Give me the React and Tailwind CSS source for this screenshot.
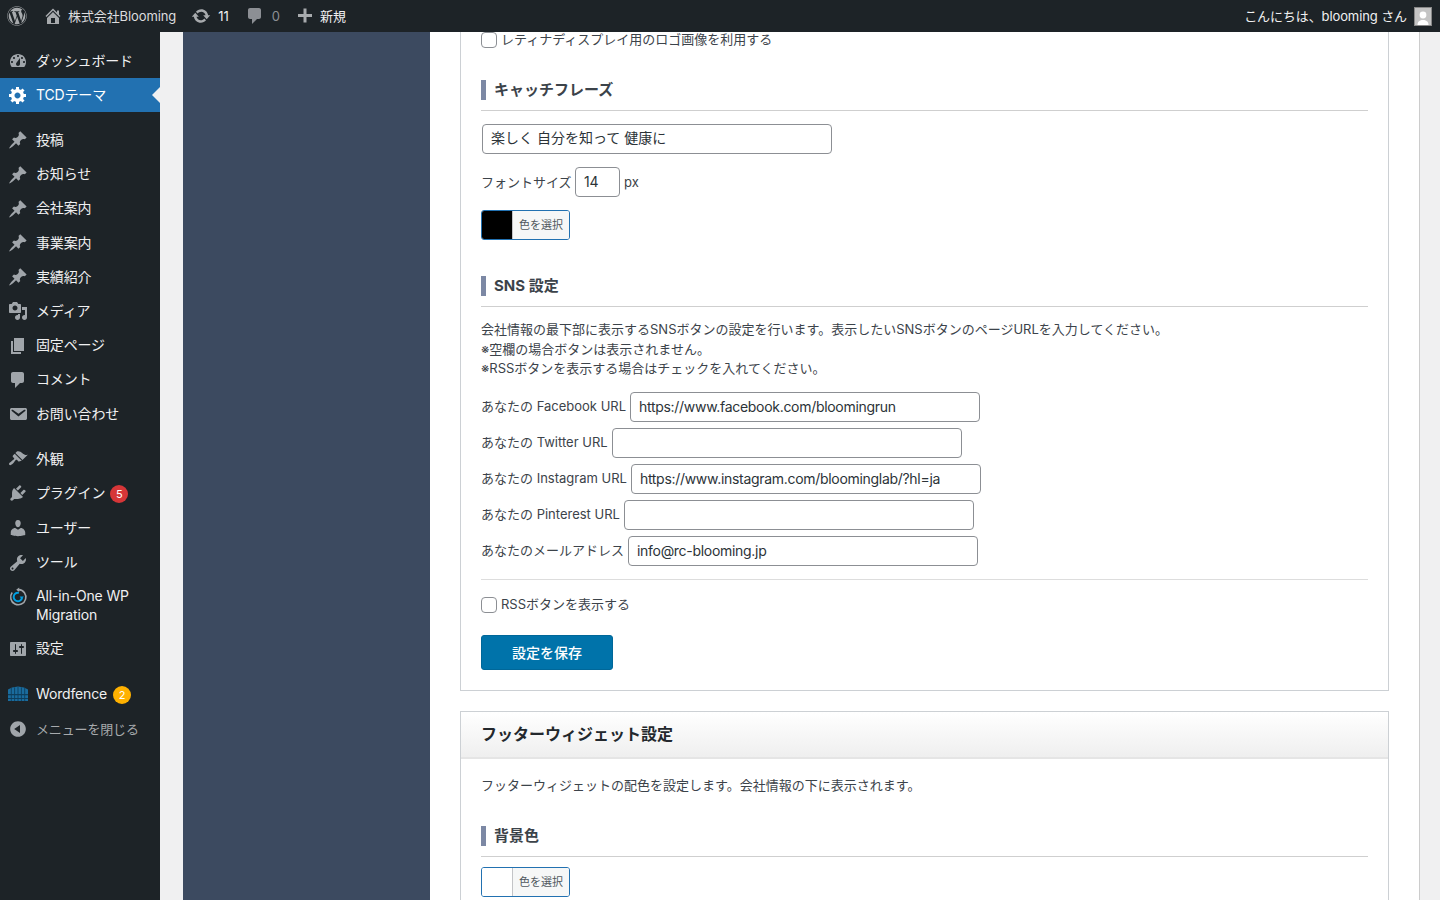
import React from "react";
import { FaWordpress } from "react-icons/fa";

const P = {
  dashboard: "M3.76 16h12.48c1.1-1.37 1.76-3.11 1.76-5 0-4.42-3.58-8-8-8s-8 3.58-8 8c0 1.89.66 3.63 1.76 5zM10 4c.55 0 1 .45 1 1s-.45 1-1 1-1-.45-1-1 .45-1 1-1zM6 6c.55 0 1 .45 1 1s-.45 1-1 1-1-.45-1-1 .45-1 1-1zm8 0c.55 0 1 .45 1 1s-.45 1-1 1-1-.45-1-1 .45-1 1-1zm-5.37 5.55L12 7v6c0 1.1-.9 2-2 2s-2-.9-2-2c0-.57.24-1.08.63-1.45zM4 10c.55 0 1 .45 1 1s-.45 1-1 1-1-.45-1-1 .45-1 1-1zm12 0c.55 0 1 .45 1 1s-.45 1-1 1-1-.45-1-1 .45-1 1-1z",
  gear: "M18 12h-2.18c-.17.7-.44 1.35-.81 1.93l1.54 1.54-2.1 2.1-1.54-1.54c-.58.36-1.23.63-1.91.79V19H8v-2.18c-.68-.16-1.33-.43-1.91-.79l-1.54 1.54-2.12-2.12 1.54-1.54c-.36-.58-.63-1.23-.79-1.91H1V9.03h2.17c.16-.7.44-1.35.8-1.94L2.43 5.55l2.1-2.1 1.54 1.54c.58-.37 1.24-.64 1.93-.81V2h3v2.18c.68.16 1.33.43 1.91.79l1.54-1.54 2.12 2.12-1.54 1.54c.36.59.64 1.24.8 1.94H18V12zm-8.5 1.5c1.66 0 3-1.34 3-3s-1.34-3-3-3-3 1.34-3 3 1.34 3 3 3z",
  pin: "M10.44 3.02l1.82-1.82 6.36 6.35-1.83 1.82c-1.05-.68-2.48-.57-3.41.36l-.75.75c-.92.93-1.04 2.35-.35 3.41l-1.83 1.82-2.41-2.41-2.8 2.79c-.42.42-3.38 2.71-3.8 2.29s1.86-3.39 2.28-3.81l2.79-2.79L4.1 9.36l1.83-1.82c1.05.69 2.48.57 3.4-.36l.75-.75c.93-.92 1.05-2.35.36-3.41z",
  media: "M13 11V4c0-.55-.45-1-1-1h-1.67L9 1H5L3.67 3H2c-.55 0-1 .45-1 1v7c0 .55.45 1 1 1h10c.55 0 1-.45 1-1zM7 4.5c1.38 0 2.5 1.12 2.5 2.5S8.38 9.5 7 9.5 4.5 8.38 4.5 7 5.62 4.5 7 4.5zM14 6h5v10.5c0 1.38-1.12 2.5-2.5 2.5S14 17.88 14 16.5s1.12-2.5 2.5-2.5c.17 0 .34.02.5.05V9h-3V6zm-4 8.05V13h2v3.5c0 1.38-1.12 2.5-2.5 2.5S7 17.88 7 16.5 8.12 14 9.5 14c.17 0 .34.02.5.05z",
  page: "M6 15V2h10v13H6zm-1 1h8v2H3V5h2v11z",
  comment: "M5 2h9c1.1 0 2 .9 2 2v7c0 1.1-.9 2-2 2h-2l-5 5v-5H5c-1.1 0-2-.9-2-2V4c0-1.1.9-2 2-2z",
  email: "M3.87 4h13.25C18.37 4 19 4.59 19 5.79v8.42c0 1.19-.63 1.79-1.88 1.79H3.87c-1.25 0-1.88-.6-1.88-1.79V5.79c0-1.2.63-1.79 1.88-1.79zm6.62 8.6l6.74-5.53c.24-.2.43-.66.13-1.07-.29-.41-.82-.42-1.17-.17l-5.7 3.86L4.8 5.83c-.35-.25-.88-.24-1.17.17-.3.41-.11.87.13 1.07z",
  appearance: "M14.48 11.06L7.41 3.99l1.5-1.5c.5-.56 2.3-.47 3.51.32 1.21.8 1.43 1.28 2.91 2.1 1.18.64 2.45 1.26 4.45.85zm-.71.71L6.7 4.7 4.93 6.47c-.39.39-.39 1.02 0 1.41l1.06 1.06c.39.39.39 1.03 0 1.42-.6.6-1.43 1.11-2.21 1.69-.35.26-.7.53-1.01.84C1.43 13.23.4 14.89 1.3 15.8c.9.91 2.56-.12 3.91-1.47.31-.31.58-.65.84-1 .58-.78 1.09-1.61 1.69-2.21.39-.39 1.02-.39 1.41 0l1.06 1.06c.39.39 1.02.39 1.41 0z",
  plugin: "M13.11 4.36L9.87 7.6 8 5.73l3.24-3.24c.35-.34 1.05-.2 1.56.32.52.51.66 1.21.31 1.55zm-8 1.77l.91-1.12 9.01 9.01-1.19.84c-.71.71-2.63 1.16-3.82 1.16H6.14L4.9 17.26c-.59.59-1.54.59-2.12 0-.59-.58-.59-1.53 0-2.12l1.24-1.24v-3.88c0-1.13.4-3.19 1.09-3.89zm7.26 3.97l3.24-3.24c.34-.35 1.04-.21 1.55.31.52.51.66 1.21.31 1.55l-3.24 3.25z",
  users: "M10 9.25c-2.27 0-2.73-3.44-2.73-3.44C7 4.02 7.82 2 9.97 2c2.16 0 2.98 2.02 2.71 3.81 0 0-.41 3.44-2.68 3.44zm0 2.57L12.72 10c2.39 0 4.52 2.33 4.52 4.53v2.49s-3.65 1.13-7.24 1.13c-3.65 0-7.24-1.13-7.24-1.13v-2.49c0-2.25 1.94-4.48 4.47-4.48z",
  tools: "M16.68 9.77c-1.34 1.34-3.3 1.67-4.95.99l-5.41 6.52c-.99.99-2.59.99-3.58 0s-.99-2.59 0-3.57l6.52-5.42c-.68-1.65-.35-3.61.99-4.95 1.28-1.28 3.12-1.62 4.72-1.06l-2.89 2.89 2.82 2.82 2.86-2.87c.53 1.58.18 3.39-1.08 4.65zM3.81 16.21c.4.39 1.04.39 1.43 0 .4-.4.4-1.04 0-1.43-.39-.4-1.03-.4-1.43 0-.39.39-.39 1.03 0 1.43z",
  settings: "M18 16V4c0-.55-.45-1-1-1H3c-.55 0-1 .45-1 1v12c0 .55.45 1 1 1h14c.55 0 1-.45 1-1zM8 11h1c.55 0 1 .45 1 1s-.45 1-1 1H8v1.5c0 .28-.22.5-.5.5s-.5-.22-.5-.5V13H6c-.55 0-1-.45-1-1s.45-1 1-1h1V5.5c0-.28.22-.5.5-.5s.5.22.5.5V11zm5-2h-1c-.55 0-1-.45-1-1s.45-1 1-1h1V5.5c0-.28.22-.5.5-.5s.5.22.5.5V7h1c.55 0 1 .45 1 1s-.45 1-1 1h-1v5.5c0 .28-.22.5-.5.5s-.5-.22-.5-.5V9z",
  collapse: "M10 2.16c4.33 0 7.84 3.51 7.84 7.84s-3.51 7.84-7.84 7.84S2.16 14.33 2.16 10 5.71 2.16 10 2.16zm2 11.72V6.12L6.18 9.97z",
  update: "M10.2 3.28c3.53 0 6.43 2.61 6.92 6h2.08l-3.5 4-3.5-4h2.32c-.45-1.97-2.21-3.45-4.32-3.45-1.45 0-2.73.71-3.54 1.78L4.95 5.66C6.23 4.2 8.11 3.28 10.2 3.28zm-.4 13.44c-3.52 0-6.43-2.61-6.92-6H.8l3.5-4c1.17 1.33 2.33 2.67 3.5 4H5.48c.45 1.97 2.21 3.45 4.32 3.45 1.45 0 2.73-.71 3.54-1.78l1.71 1.95c-1.28 1.46-3.15 2.38-5.25 2.38z",
  home: "M16 8.5l1.53 1.53-1.06 1.06L10 4.62l-6.47 6.47-1.06-1.06L10 2.5l4 4v-2h2v4zm-6-2.46l6 5.99V18H4v-5.97zM12 17v-5H8v5h4z",
  plus: "M17 8v3h-5.5v5.5h-3V11H3V8h5.5V2.5h3V8H17z",
};

function Ic({ d, className = "w-5 h-5 fill-[#a0a5aa]" }) {
  return (
    <svg viewBox="0 0 20 20" className={className}>
      <path d={d} />
    </svg>
  );
}

function AioIcon() {
  return (
    <svg viewBox="0 0 20 20" className="w-5 h-5" fill="none">
      <path d="M4.2 5.6a7.6 7.6 0 1 0 6.6-3" stroke="#a0a5aa" strokeWidth="1.6" />
      <path d="M11.2 0.4v4.6l-3-2.3z" fill="#a0a5aa" />
      <path d="M14 10.8a4.2 4.2 0 1 1-3.2-4.9" stroke="#00a0e3" strokeWidth="2" />
      <path d="M11.6 9.4h4.2l-2.1 2.8z" fill="#00a0e3" />
    </svg>
  );
}

function FenceIcon() {
  return (
    <svg viewBox="0 0 20 16" className="ml-[1px] h-4 w-5">
      <path d="M0 3.5 4 1.6 10 .4 16 1.6 20 3.5V15H0z" fill="#1a6c9e" />
      <path d="M0 8h20v1.2H0zM0 12h20v1H0z" fill="#0e3f5e" />
      <path d="M3.3 2v13M6.6 1.4V15M10 1V15M13.4 1.4V15M16.7 2v13" stroke="#0e3f5e" strokeWidth="0.9" />
    </svg>
  );
}

function Item({ icon, children, badge, active, muted, small }) {
  return (
    <div
      className={`relative flex items-start py-2 leading-[18.2px] ${
        small ? "text-[13px]" : "text-sm"
      } ${active ? "bg-[#2271b1] text-white" : muted ? "text-[#a7aaad]" : "text-[#f0f0f1]"}`}
    >
      <span className="flex h-[18.2px] w-9 shrink-0 items-center justify-center pr-[1px]">{icon}</span>
      <span className="-mt-[0.3px] tracking-[-0.15px]">{children}</span>
      {badge}
      {active && (
        <span className="absolute right-0 top-[9px] h-0 w-0 border-y-8 border-r-8 border-y-transparent border-r-[#f0f0f1]" />
      )}
    </div>
  );
}

function Badge({ color, className, children }) {
  return (
    <span
      className={`mt-[1px] flex h-[18px] w-[18px] items-center justify-center rounded-full text-[11px] text-white ${color} ${className}`}
    >
      {children}
    </span>
  );
}

function Sidebar() {
  return (
    <aside className="w-40 shrink-0 bg-[#1d2327] pt-3">
      <Item icon={<Ic d={P.dashboard} />}>ダッシュボード</Item>
      <Item active icon={<Ic d={P.gear} className="w-5 h-5 fill-white" />}>TCDテーマ</Item>
      <div className="h-[11px]" />
      <Item icon={<Ic d={P.pin} />}>投稿</Item>
      <Item icon={<Ic d={P.pin} />}>お知らせ</Item>
      <Item icon={<Ic d={P.pin} />}>会社案内</Item>
      <Item icon={<Ic d={P.pin} />}>事業案内</Item>
      <Item icon={<Ic d={P.pin} />}>実績紹介</Item>
      <Item icon={<Ic d={P.media} />}>メディア</Item>
      <Item icon={<Ic d={P.page} />}>固定ページ</Item>
      <Item icon={<Ic d={P.comment} />}>コメント</Item>
      <Item icon={<Ic d={P.email} />}>お問い合わせ</Item>
      <div className="h-[11px]" />
      <Item icon={<Ic d={P.appearance} />}>外観</Item>
      <Item icon={<Ic d={P.plugin} />} badge={<Badge color="bg-[#d63638]" className="ml-[5px]">5</Badge>}>プラグイン</Item>
      <Item icon={<Ic d={P.users} />}>ユーザー</Item>
      <Item icon={<Ic d={P.tools} />}>ツール</Item>
      <Item icon={<AioIcon />}>All-in-One WP<br />Migration</Item>
      <Item icon={<Ic d={P.settings} />}>設定</Item>
      <div className="h-[11px]" />
      <Item icon={<FenceIcon />} badge={<Badge color="bg-[#ffb100]" className="ml-[6px]">2</Badge>}>Wordfence</Item>
      <Item muted small icon={<Ic d={P.collapse} />}>メニューを閉じる</Item>
    </aside>
  );
}

function TopBar() {
  return (
    <header className="flex h-8 shrink-0 items-center bg-[#1d2327] text-[13px] text-[#f0f0f1]">
      <FaWordpress className="ml-[7px] h-5 w-5 text-[#a7aaad]" />
      <Ic d={P.home} className="ml-[16px] h-5 w-5 fill-[#a7aaad]" />
      <span className="ml-[5px] pt-[1px] tracking-[-0.1px] text-[#dcdcde]">株式会社Blooming</span>
      <Ic d={P.update} className="ml-[15px] h-5 w-5 fill-[#a7aaad]" />
      <span className="ml-[7px] pt-[1px]">11</span>
      <Ic d={P.comment} className="ml-[16px] h-5 w-5 fill-[#8c8f94]" />
      <span className="ml-[7px] pt-[1px] text-[#8c8f94]">0</span>
      <Ic d={P.plus} className="ml-[15px] h-5 w-5 fill-[#a7aaad]" />
      <span className="ml-[5px] pt-[1px]">新規</span>
      <span className="ml-auto pt-[1px] tracking-[-0.1px]">こんにちは、blooming さん</span>
      <span className="ml-[7px] mr-2 flex h-[19px] w-[18px] items-end justify-center overflow-hidden border border-[#888] bg-[#c4c4c4]">
        <svg viewBox="0 0 16 17" className="h-full w-full fill-white">
          <circle cx="8" cy="7" r="3.4" />
          <path d="M2.5 17c0-3.6 2.5-5 5.5-5s5.5 1.4 5.5 5z" />
        </svg>
      </span>
    </header>
  );
}

function Heading({ children, className = "" }) {
  return (
    <div className={`flex h-[31px] items-start gap-2 border-b border-[#cfcfcf] ${className}`}>
      <span className="h-5 w-[5px] bg-[#7c88a4]" />
      <h3 className="text-[15px] font-bold leading-[20px] text-[#3c434a]">{children}</h3>
    </div>
  );
}

function Check({ children }) {
  return (
    <label className="flex h-4 items-center gap-1">
      <span className="h-4 w-4 rounded-[4px] border border-[#8c8f94] bg-white" />
      <span>{children}</span>
    </label>
  );
}

function Field({ value, className }) {
  return (
    <div className={`flex h-[30px] items-center rounded-[4px] border border-[#8c8f94] bg-white px-2 text-sm tracking-[-0.3px] text-[#2c3338] ${className}`}>
      {value}
    </div>
  );
}

function ColorBtn({ color }) {
  return (
    <div className="flex h-[30px] w-[89px] overflow-hidden rounded-[3px] border border-[#2271b1]">
      <span className={`w-[31px] border-r border-[#c3c4c7] ${color}`} />
      <span className="flex flex-1 items-center justify-center bg-[#f6f7f7] pt-[1px] text-[11px] text-[#50575e]">色を選択</span>
    </div>
  );
}

function Row({ label, value }) {
  return (
    <div className="flex items-center gap-1">
      <span className="whitespace-nowrap pt-[1px]">{label}</span>
      <Field value={value} className="w-[350px]" />
    </div>
  );
}

function Content() {
  return (
    <main className="flex min-w-0 flex-1 overflow-hidden bg-[#f0f0f1] text-[13px] text-[#3c434a]">
      <div className="ml-[23px] w-[247px] shrink-0 bg-[#3c4a60]" />
      <div className="w-[990px] shrink-0 border-r border-[#cccccc] bg-white px-[30px]">
        <section className="h-[659px] border-x border-b border-[#ccd0d4] px-5">
          <Check>レティナディスプレイ用のロゴ画像を利用する</Check>
          <Heading className="mt-8">キャッチフレーズ</Heading>
          <Field value="楽しく 自分を知って 健康に" className="mt-[13px] ml-[1px] w-[350px] pb-[2px] tracking-normal" />
          <div className="mt-[13px] flex items-center gap-1">
            <span className="w-[90px] shrink-0 whitespace-nowrap pt-[1px]">フォントサイズ</span>
            <Field value="14" className="w-[45px]" />
            <span className="pt-[1px]">px</span>
          </div>
          <div className="mt-[13px]"><ColorBtn color="bg-black" /></div>
          <Heading className="mt-9">SNS 設定</Heading>
          <div className="mt-[13px] leading-[19.5px]">
            <p>会社情報の最下部に表示するSNSボタンの設定を行います。表示したいSNSボタンのページURLを入力してください。</p>
            <p>※空欄の場合ボタンは表示されません。</p>
            <p>※RSSボタンを表示する場合はチェックを入れてください。</p>
          </div>
          <div className="mt-[13px] flex flex-col gap-[6px]">
            <Row label="あなたの Facebook URL" value="https://www.facebook.com/bloomingrun" />
            <Row label="あなたの Twitter URL" value="" />
            <Row label="あなたの Instagram URL" value="https://www.instagram.com/bloominglab/?hl=ja" />
            <Row label="あなたの Pinterest URL" value="" />
            <Row label="あなたのメールアドレス" value="info@rc-blooming.jp" />
          </div>
          <hr className="mt-[13px] border-[#dddddd]" />
          <div className="mt-[17px]"><Check>RSSボタンを表示する</Check></div>
          <button className="mt-[22px] flex h-[35px] w-[132px] items-center justify-center rounded-[3px] border border-[#006799] bg-[#0073aa] pt-[1px] text-sm font-medium text-white">
            設定を保存
          </button>
        </section>
        <section className="mt-5 h-[300px] border border-[#ccd0d4]">
          <div className="flex h-[47px] items-center border-b-2 border-[#e5e5e5] bg-gradient-to-b from-white to-[#efefef] px-5 pb-[1px]">
            <h2 className="text-base font-bold text-[#23282d]">フッターウィジェット設定</h2>
          </div>
          <div className="px-5">
            <p className="mt-[17px] leading-[19.5px]">フッターウィジェットの配色を設定します。会社情報の下に表示されます。</p>
            <Heading className="mt-[30px]">背景色</Heading>
            <div className="mt-[10px]"><ColorBtn color="bg-white" /></div>
          </div>
        </section>
      </div>
    </main>
  );
}

export default function App() {
  return (
    <div className="flex h-screen flex-col overflow-hidden font-['Inter','Noto_Sans_CJK_JP',sans-serif]">
      <TopBar />
      <div className="flex min-h-0 flex-1">
        <Sidebar />
        <Content />
      </div>
    </div>
  );
}
